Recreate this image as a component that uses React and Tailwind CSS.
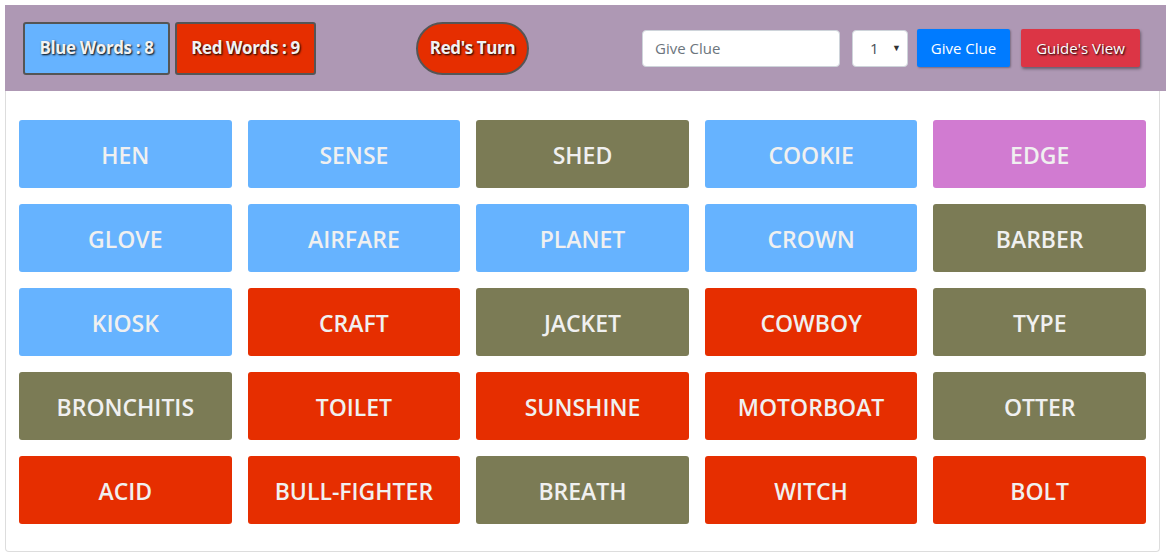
import React from 'react';

const COLORS = {
  blue: 'bg-[#66b3ff]',
  red: 'bg-[#e62e00]',
  olive: 'bg-[#7b7b55]',
  pink: 'bg-[#d17bd1]',
};

const words = [
  ['HEN', 'blue'], ['SENSE', 'blue'], ['SHED', 'olive'], ['COOKIE', 'blue'], ['EDGE', 'pink'],
  ['GLOVE', 'blue'], ['AIRFARE', 'blue'], ['PLANET', 'blue'], ['CROWN', 'blue'], ['BARBER', 'olive'],
  ['KIOSK', 'blue'], ['CRAFT', 'red'], ['JACKET', 'olive'], ['COWBOY', 'red'], ['TYPE', 'olive'],
  ['BRONCHITIS', 'olive'], ['TOILET', 'red'], ['SUNSHINE', 'red'], ['MOTORBOAT', 'red'], ['OTTER', 'olive'],
  ['ACID', 'red'], ['BULL-FIGHTER', 'red'], ['BREATH', 'olive'], ['WITCH', 'red'], ['BOLT', 'red'],
];

const font = "font-['Open_Sans','Noto_Sans',sans-serif]";

export default function App() {
  return (
    <div className={`bg-white min-h-[559px] pt-[5px] pl-[5px] ${font}`}>
      <div className="w-[1161px] h-[86px] bg-[#ae98b4] flex items-center pl-[18px] pr-[26px]">
        <div className="w-[147px] h-[53px] flex items-center justify-center bg-[#66b3ff] border-2 border-[#555] rounded-[3px] text-[#f2f2f2] text-[17px] font-bold tracking-[-0.4px] [text-shadow:1px_1px_2px_#000]">
          Blue Words : 8
        </div>
        <div className="ml-[5px] w-[141px] h-[53px] flex items-center justify-center bg-[#e62e00] border-2 border-[#555] rounded-[3px] text-[#f2f2f2] text-[17px] font-bold tracking-[-0.4px] [text-shadow:1px_1px_2px_#000]">
          Red Words : 9
        </div>
        <div className="ml-[100px] w-[113px] h-[53px] flex items-center justify-center bg-[#e62e00] border-2 border-[#555] rounded-full text-[#f2f2f2] text-[17px] font-bold tracking-[-0.4px] [text-shadow:1px_1px_2px_#000]">
          Red's Turn
        </div>
        <input
          type="text"
          placeholder="Give Clue"
          className="ml-auto w-[198px] h-[37px] px-3 bg-white border border-[#ced4da] rounded-[4px] text-[15px] text-[#495057] placeholder-[#6c757d] outline-none"
        />
        <div className="ml-[12px] w-[56px] h-[37px] bg-white border border-[#ced4da] rounded-[4px] flex items-center pl-[17px] pr-[6px] text-[15px] text-[#495057]">
          <span className="flex-1">1</span>
          <span className="text-[9px] text-[#333]">▼</span>
        </div>
        <button className="ml-[9px] w-[93px] h-[38px] bg-[#007bff] text-white text-[15px] rounded-[2px] shadow-[1px_1px_2px_rgba(0,0,0,0.3)]">
          Give Clue
        </button>
        <button className="ml-[11px] w-[119px] h-[38px] bg-[#dc3545] text-white text-[15px] rounded-[2px] shadow-[1px_2px_3px_rgba(0,0,0,0.4)] [text-shadow:1px_1px_2px_#000]">
          Guide's View
        </button>
      </div>
      <div className="w-[1155px] border border-[#ddd] border-t-0 rounded-b-[4px] px-[13px] pt-[29px] pb-[27px]">
        <div className="grid grid-cols-5 gap-4">
          {words.map(([w, c]) => (
            <div
              key={w}
              className={`${COLORS[c]} h-[68px] rounded-[3px] flex items-center justify-center pt-[2px] text-[#f0f0f0] text-[23px] font-semibold`}
            >
              {w}
            </div>
          ))}
        </div>
      </div>
    </div>
  );
}
